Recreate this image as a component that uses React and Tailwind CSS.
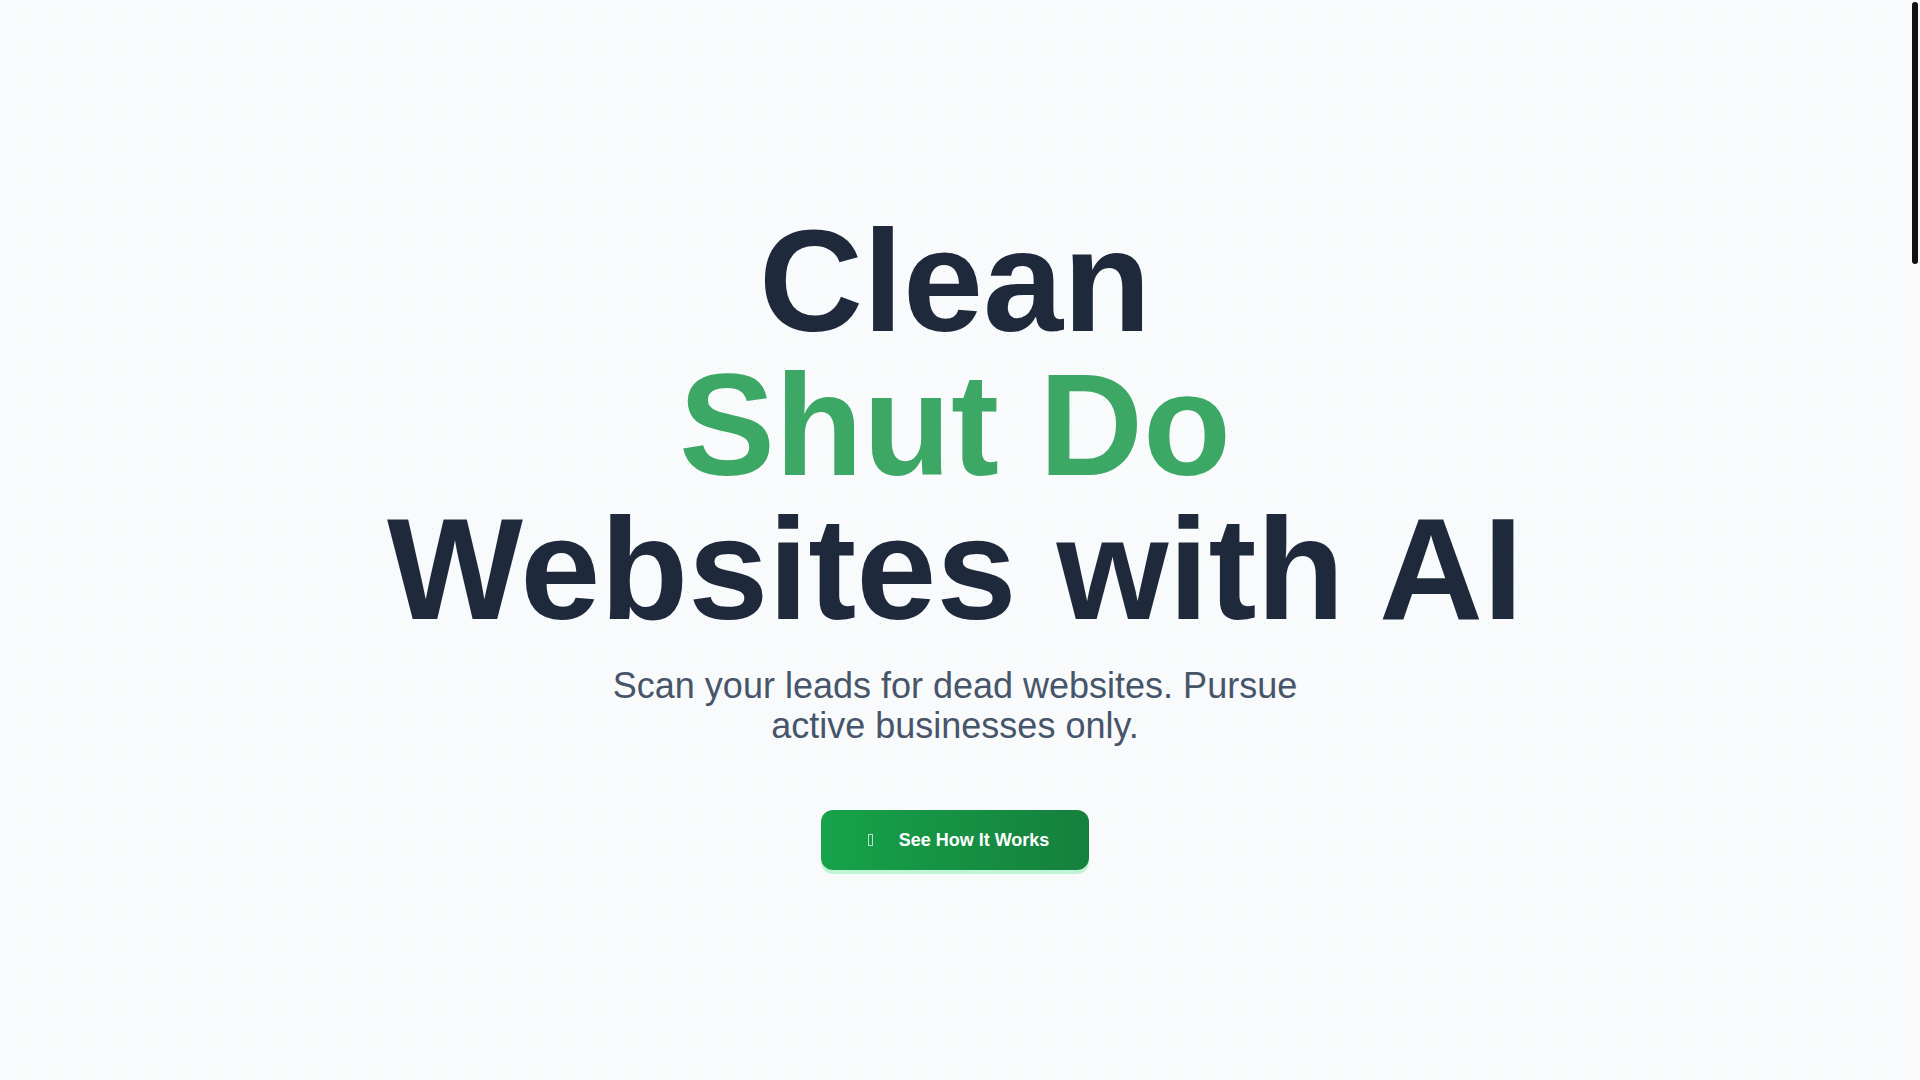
import React from "react";

const Hero = () => {
  return (
    <section className="min-h-screen flex flex-col items-center justify-center text-center px-6">
      <h1 className="font-['Liberation_Sans',Arial,sans-serif] font-bold text-[144px] leading-none text-[#1e293b]">
        <span className="block">Clean</span>
        <span className="block text-[#3da765]">Shut Do</span>
        <span className="block">Websites with AI</span>
      </h1>
      <p className="mt-6 max-w-3xl font-['Liberation_Sans',Arial,sans-serif] text-4xl leading-10 text-[#475569]">
        Scan your leads for dead websites. Pursue active businesses only.
      </p>
      <button className="mt-16 flex items-center gap-[18px] px-10 py-4 rounded-xl bg-gradient-to-r from-[#16a34a] to-[#15803d] text-white font-['Liberation_Sans',Arial,sans-serif] font-bold text-lg leading-7 shadow-[0_4px_0_0_rgba(134,239,172,0.5)]">
        <span className="w-5 flex justify-center">
          <span className="block w-[5px] h-[12px] border border-white/70" />
        </span>
        <span>See How It Works</span>
      </button>
    </section>
  );
};

// page scrollbar as drawn in the design (thin dark thumb on a light rail)
const ScrollRail = () => (
  <div aria-hidden="true" className="fixed top-0 right-0 w-[10px] h-screen bg-[#fafafa] p-[2px]">
    <div className="h-[262px] rounded-full bg-[#111111]" />
  </div>
);

const App = () => {
  return (
    <div className="pr-[10px] bg-[#fafafa]">
      <div className="bg-[#f8fafc] bg-[radial-gradient(circle,#cdf9da_1px,transparent_1px)] bg-[size:32px_32px]">
        <Hero />
        <div className="h-[3370px]" />
      </div>
      <ScrollRail />
    </div>
  );
};

export default App;
